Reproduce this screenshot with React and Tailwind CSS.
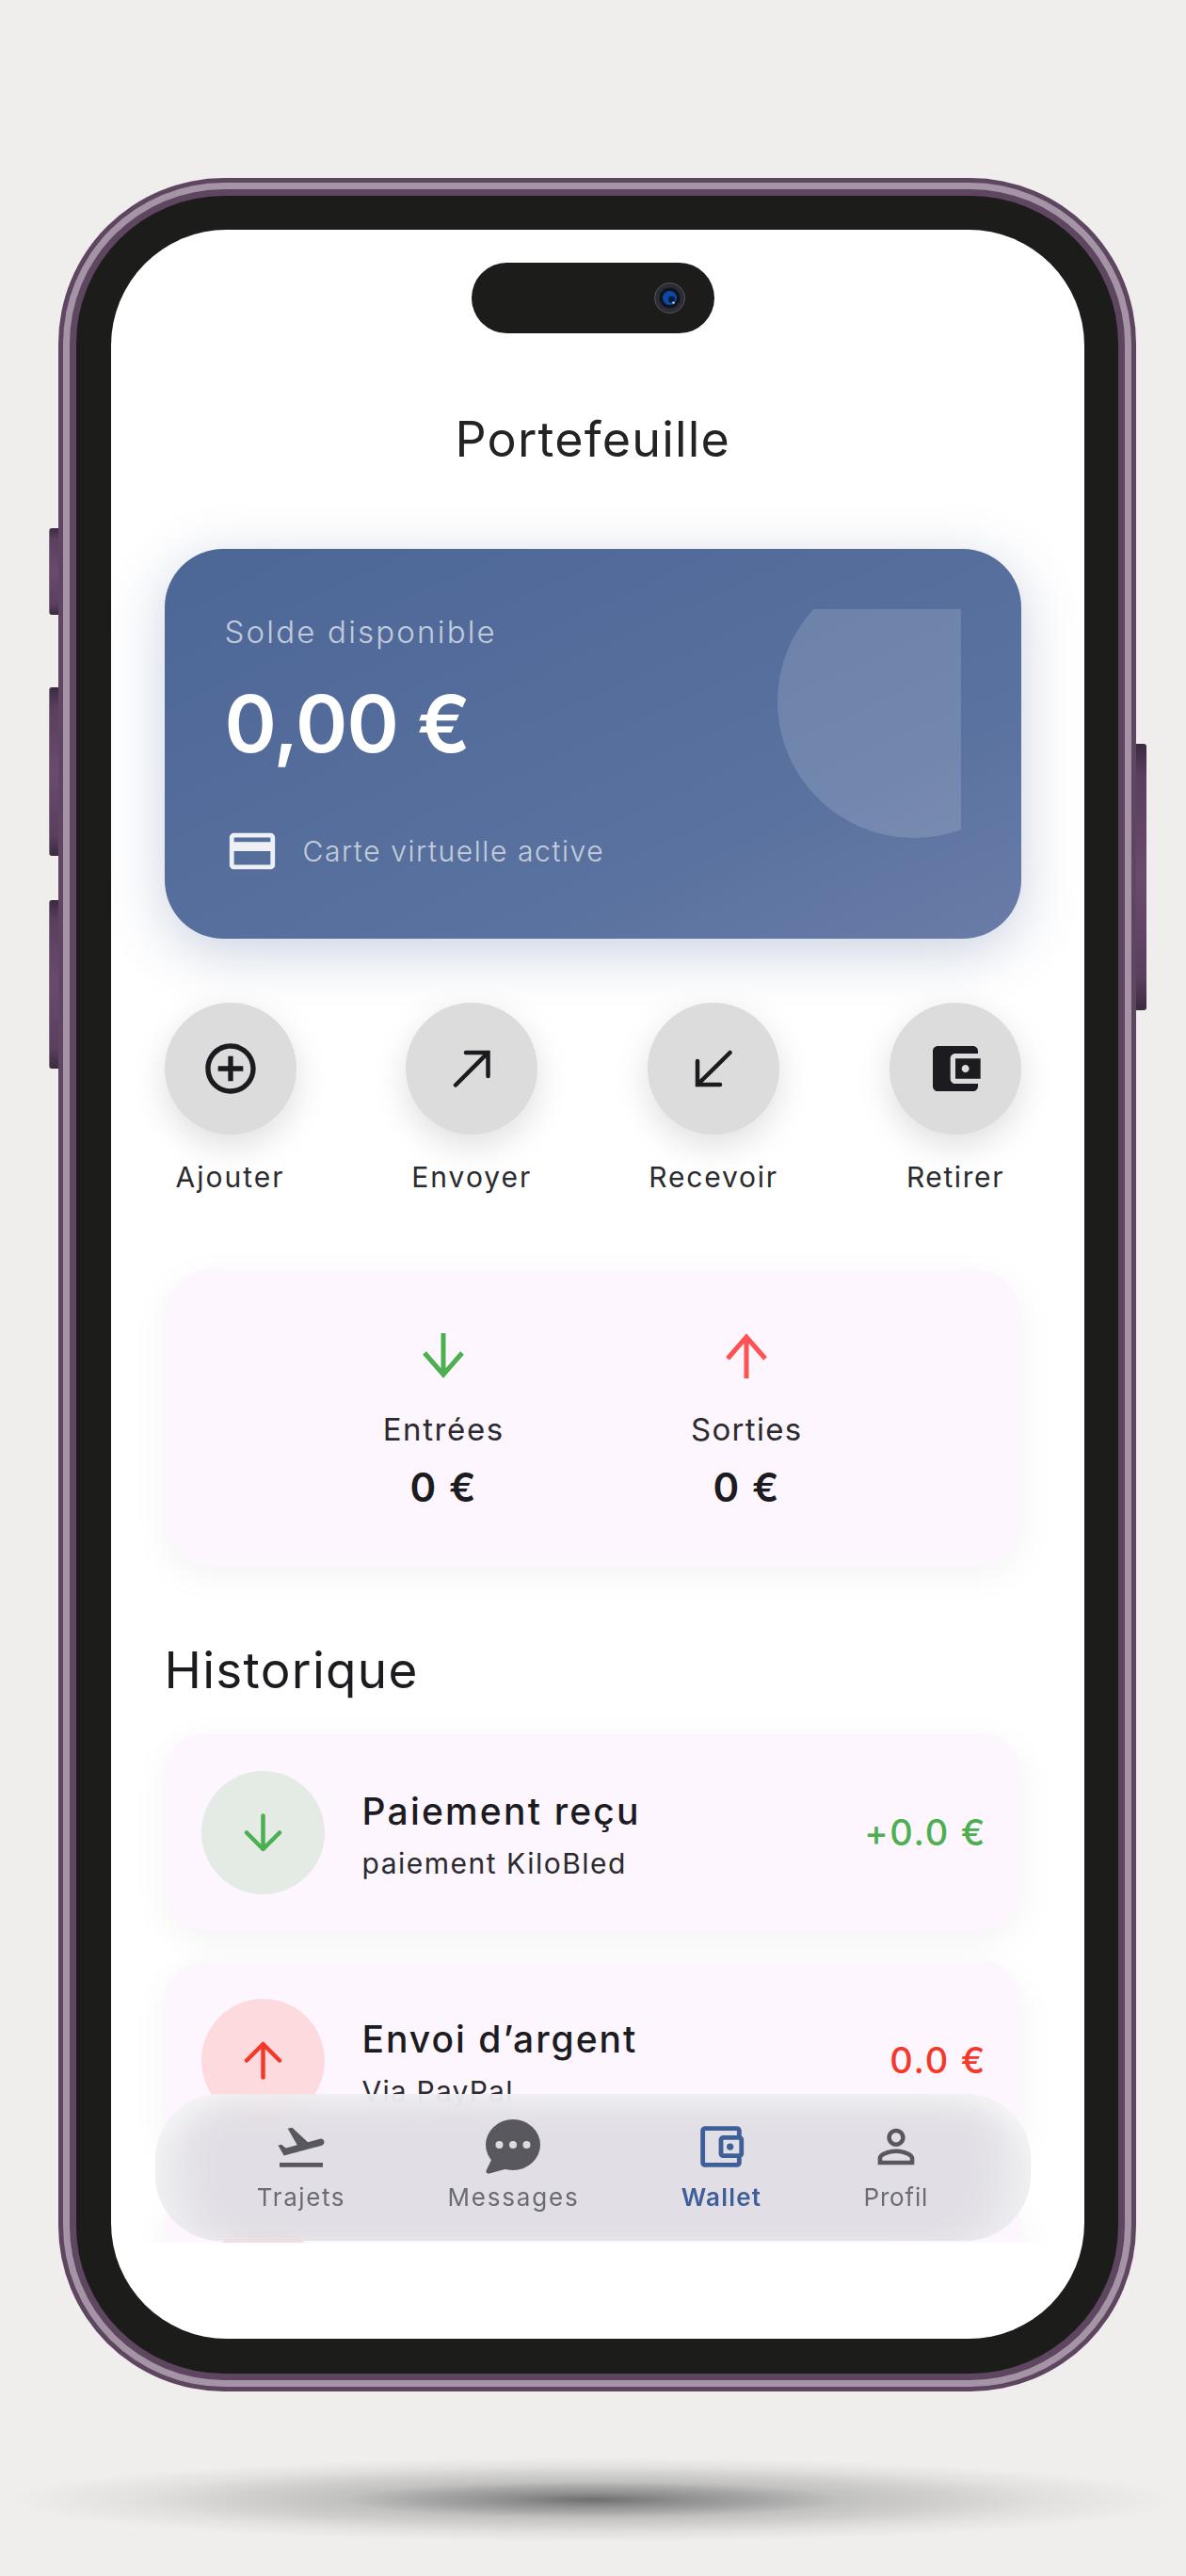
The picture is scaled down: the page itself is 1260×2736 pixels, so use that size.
import React from 'react';

const sideGradient = 'bg-[linear-gradient(to_bottom,#3b2a40,#5a3f5e_12%,#6b4a6e_50%,#5a3f5e_88%,#3b2a40)]';
const sideButton = `absolute w-[10px] left-[-10px] rounded-l-[3px] border-l border-[#7d7480] ${sideGradient}`;

const PlusCircleIcon = () => (
  <svg width="64" height="64" viewBox="0 0 24 24" fill="#1c1b1f">
    <path d="M13 7h-2v4H7v2h4v4h2v-4h4v-2h-4V7zm-1-5C6.48 2 2 6.48 2 12s4.48 10 10 10 10-4.48 10-10S17.52 2 12 2zm0 18c-4.41 0-8-3.59-8-8s3.59-8 8-8 8 3.59 8 8-3.59 8-8 8z" />
  </svg>
);

const ArrowOutIcon = () => (
  <svg width="40" height="40" viewBox="0 0 40 40" fill="none" stroke="#1c1b1f" strokeWidth="4.5" strokeLinecap="round">
    <path d="M14 3H37.5V28M37.5 3L3 37.5" />
  </svg>
);

const ArrowInIcon = () => (
  <svg width="40" height="40" viewBox="0 0 40 40" fill="none" stroke="#1c1b1f" strokeWidth="4.5" strokeLinecap="round">
    <path d="M3 12V37H27M3 37L37.5 3" />
  </svg>
);

const WalletFilledIcon = () => (
  <svg width="64" height="64" viewBox="0 0 24 24" fill="#1c1b1f">
    <path d="M21 18v1c0 1.1-.9 2-2 2H5c-1.11 0-2-.9-2-2V5c0-1.1.89-2 2-2h14c1.1 0 2 .9 2 2v1h-9c-1.11 0-2 .9-2 2v8c0 1.1.89 2 2 2h9zm-9-2h10V8H12v8zm4-2.5c-.83 0-1.5-.67-1.5-1.5s.67-1.5 1.5-1.5 1.5.67 1.5 1.5-.67 1.5-1.5 1.5z" />
  </svg>
);

const StatArrow = ({ up, color }) => (
  <svg width="46" height="48" viewBox="0 0 46 48" fill="none" stroke={color} strokeWidth="5">
    {up ? <path d="M23 48V4M3 27L23 4L43 27" /> : <path d="M23 0V44M3 21L23 44L43 21" />}
  </svg>
);

const RowArrow = ({ up, color }) => (
  <svg width="41" height="41" viewBox="0 0 41 41" fill="none" stroke={color} strokeWidth="4.5" strokeLinecap="round" strokeLinejoin="round">
    {up ? <path d="M20.5 38.5V3M3 20.5L20.5 3L38 20.5" /> : <path d="M20.5 2.5V38M3 20.5L20.5 38L38 20.5" />}
  </svg>
);

const TakeoffIcon = () => (
  <svg width="58" height="58" viewBox="0 0 24 24" fill="#58585e">
    <path d="M2.5 19h19v2h-19zm19.57-9.36c-.21-.8-1.04-1.28-1.84-1.06L14.92 10l-6.9-6.43-1.93.51 4.14 7.17-4.97 1.33-1.97-1.54-1.45.39 2.59 4.49s7.12-1.9 16.57-4.43c.81-.23 1.28-1.05 1.07-1.85z" />
  </svg>
);

const ChatIcon = () => (
  <svg width="58" height="58" viewBox="0 0 58 58">
    <ellipse cx="29" cy="27" rx="29" ry="27" fill="#58585e" />
    <path d="M7 41L0.5 54.5C0 57 2 58 4 57.5L24 52Z" fill="#58585e" />
    <circle cx="14.5" cy="27" r="4" fill="#dcdbe0" />
    <circle cx="29" cy="27" r="4" fill="#dcdbe0" />
    <circle cx="43.5" cy="27" r="4" fill="#dcdbe0" />
  </svg>
);

const WalletOutlineIcon = () => (
  <svg width="58" height="58" viewBox="0 0 24 24" fill="#3f5f99">
    <path d="M21 7.28V5c0-1.1-.9-2-2-2H5c-1.11 0-2 .9-2 2v14c0 1.1.89 2 2 2h14c1.1 0 2-.9 2-2v-2.28c.59-.35 1-.98 1-1.72V9c0-.74-.41-1.37-1-1.72zM20 9v6h-7V9h7zM5 19V5h14v2h-6c-1.1 0-2 .9-2 2v6c0 1.1.9 2 2 2h6v2H5z" />
    <circle cx="16" cy="12" r="1.5" />
  </svg>
);

const PersonIcon = () => (
  <svg width="58" height="58" viewBox="0 0 24 24" fill="#58585e">
    <path d="M12 5.9c1.16 0 2.1.94 2.1 2.1s-.94 2.1-2.1 2.1S9.9 9.16 9.9 8s.94-2.1 2.1-2.1m0 9c2.97 0 6.1 1.46 6.1 2.1v1.1H5.9V17c0-.64 3.13-2.1 6.1-2.1M12 4C9.79 4 8 5.79 8 8s1.79 4 4 4 4-1.79 4-4-1.79-4-4-4zm0 9c-2.67 0-8 1.34-8 4v3h16v-3c0-2.66-5.33-4-8-4z" />
  </svg>
);

const actions = [
  { label: 'Ajouter', icon: <PlusCircleIcon />, tracking: 'tracking-[2px]' },
  { label: 'Envoyer', icon: <ArrowOutIcon />, tracking: 'tracking-[2px]' },
  { label: 'Recevoir', icon: <ArrowInIcon />, tracking: 'tracking-[1.8px]' },
  { label: 'Retirer', icon: <WalletFilledIcon />, tracking: 'tracking-[1.6px]' },
];

const navItems = [
  { label: 'Trajets', icon: <TakeoffIcon />, tracking: 'tracking-[1.6px]' },
  { label: 'Messages', icon: <ChatIcon />, tracking: 'tracking-[1.8px]' },
  { label: 'Wallet', icon: <WalletOutlineIcon />, tracking: 'tracking-[1.2px]', active: true },
  { label: 'Profil', icon: <PersonIcon />, tracking: 'tracking-[0.8px]' },
];

const rowCard = 'flex items-center h-[210px] pl-[39px] pr-[37px] rounded-[44px] bg-[#fdf6fe] shadow-[0_10px_40px_rgba(0,0,0,0.05)]';

const Transaction = ({ title, sub, amount, up, titleTracking, subTracking }) => (
  <div className={rowCard}>
    <div className={`w-[131px] h-[131px] rounded-full flex items-center justify-center shrink-0 ${up ? 'bg-[#fddadd]' : 'bg-[#e3ebe4]'}`}>
      <RowArrow up={up} color={up ? '#f4392b' : '#4caf50'} />
    </div>
    <div className="ml-[40px] flex-1 pt-[4px]">
      <div className={`text-[39px] leading-[54px] font-medium text-[#1c1b1f] ${titleTracking}`}>{title}</div>
      <div className={`mt-[7px] text-[30px] leading-[42px] text-[#2b2a2e] ${subTracking}`}>{sub}</div>
    </div>
    <div className={`text-[38px] leading-[54px] font-medium tracking-[1.7px] ${up ? 'text-[#f4392b]' : 'text-[#4caf50]'}`}>{amount}</div>
  </div>
);

export default function App() {
  return (
    <div className="w-[1260px] h-[2736px] overflow-hidden bg-[#efeeec] pt-[189px] font-[Inter,sans-serif]">
      {/* phone frame */}
      <div className="relative ml-[62px] w-[1145px] h-[2351px] rounded-[176px] bg-[#5e4560] p-[5px]">
        <div className={`${sideButton} top-[372px] h-[92px]`} />
        <div className={`${sideButton} top-[541px] h-[179px]`} />
        <div className={`${sideButton} top-[767px] h-[179px]`} />
        <div className={`absolute right-[-11px] top-[601px] h-[283px] w-[11px] rounded-r-[3px] ${sideGradient}`} />

        <div className="w-full h-full rounded-[171px] bg-[#a593a6] p-[7px]">
          <div className="w-full h-full rounded-[164px] bg-[#5e4560] p-[7px]">
            <div className="w-full h-full rounded-[157px] bg-[#1c1c1a] pt-[36px] pl-[36.5px] pr-[36px] pb-[37px]">
              {/* screen */}
              <div className="relative w-full h-full rounded-[123px] bg-white overflow-hidden">
                <div className="h-[2138px] overflow-hidden pl-[57px] pr-[67px] pt-[35px]">
                  {/* island */}
                  <div className="mx-auto w-[258px] h-[75px] rounded-full bg-[#1c1c1a] flex items-center justify-end pr-[31px]">
                    <svg width="33" height="33" viewBox="0 0 33 33">
                      <circle cx="16.5" cy="16.5" r="16" fill="#2c2d33" stroke="#55565c" strokeWidth="1" />
                      <circle cx="16.5" cy="16.5" r="11" fill="#10141f" />
                      <circle cx="16.5" cy="16.5" r="7.5" fill="#0c4aa6" />
                      <circle cx="18.5" cy="18" r="3.5" fill="#0a1a3a" />
                      <circle cx="20.5" cy="21.5" r="1.2" fill="#c9d6ea" />
                    </svg>
                  </div>

                  <h1 className="mt-[83px] text-center text-[52px] leading-[60px] font-normal tracking-[1.2px] text-[#232326]">Portefeuille</h1>

                  {/* balance card */}
                  <div className="mt-[86px] h-[414px] rounded-[62px] p-[64px] text-white bg-gradient-to-br from-[#4c6696] via-[#5a729f] via-70% to-[#6a7ca8] shadow-[0_14px_60px_rgba(78,104,152,0.3)]">
                    <div className="relative h-full overflow-hidden">
                      <div className="absolute right-[-95px] top-[-47px] w-[290px] h-[290px] rounded-full bg-white/15" />
                      <div className="relative text-[33px] leading-[48px] font-light text-white/65 tracking-[2.2px]">Solde disponible</div>
                      <div className="relative mt-[24px] text-[84px] leading-[100px] font-semibold tracking-[-1px]">0,00 €</div>
                      <div className="relative mt-[56px] flex items-center gap-[25px]">
                        <svg width="58" height="58" viewBox="0 0 24 24" fill="#eef0f6">
                          <path d="M20 4H4c-1.11 0-1.99.89-1.99 2L2 18c0 1.11.89 2 2 2h16c1.11 0 2-.89 2-2V6c0-1.11-.89-2-2-2zm0 14H4v-6h16v6zm0-10H4V6h16v2z" />
                        </svg>
                        <span className="text-[30px] font-light text-white/65 tracking-[1.6px]">Carte virtuelle active</span>
                      </div>
                    </div>
                  </div>

                  {/* actions */}
                  <div className="mt-[68px] flex justify-between">
                    {actions.map((a) => (
                      <div key={a.label} className="w-[140px] flex flex-col items-center">
                        <div className="w-[140px] h-[140px] rounded-full flex items-center justify-center bg-[#dcdcdc] shadow-[0_12px_36px_rgba(0,0,0,0.13)]">
                          {a.icon}
                        </div>
                        <span className={`mt-[23px] text-[30px] leading-[44px] whitespace-nowrap text-[#2b2a2e] ${a.tracking}`}>{a.label}</span>
                      </div>
                    ))}
                  </div>

                  {/* totals */}
                  <div className="mt-[77px] h-[313px] rounded-[48px] bg-[#fdf6fe] pt-[67px] pl-[5px] shadow-[0_10px_40px_rgba(0,0,0,0.05)]">
                    <div className="mx-auto w-[644px] grid grid-cols-2">
                      <div className="flex flex-col items-center">
                        <StatArrow color="#4caf50" />
                        <span className="mt-[31px] text-[33px] leading-[46px] tracking-[1.6px] text-[#2b2a2e]">Entrées</span>
                        <span className="mt-[11px] text-[42px] leading-[56px] font-semibold tracking-[1.5px] text-[#1c1b1f]">0 €</span>
                      </div>
                      <div className="flex flex-col items-center">
                        <StatArrow up color="#ff5252" />
                        <span className="mt-[31px] text-[33px] leading-[46px] tracking-[1.3px] text-[#2b2a2e]">Sorties</span>
                        <span className="mt-[11px] text-[42px] leading-[56px] font-semibold tracking-[1.5px] text-[#1c1b1f]">0 €</span>
                      </div>
                    </div>
                  </div>

                  <h2 className="mt-[77px] text-[53px] leading-[70px] font-normal tracking-[1.3px] text-[#1c1b1f]">Historique</h2>

                  <div className="mt-[32px] flex flex-col gap-[32px]">
                    <Transaction title="Paiement reçu" sub="paiement KiloBled" amount="+0.0 €" titleTracking="tracking-[2.2px]" subTracking="tracking-[1.5px]" />
                    <Transaction up title="Envoi d’argent" sub="Via PayPal" amount="0.0 €" titleTracking="tracking-[2px]" subTracking="tracking-[1.2px]" />
                    <div className={rowCard}>
                      <div className="w-[131px] h-[131px] rounded-full bg-[#fddadd] shrink-0" />
                    </div>
                  </div>
                </div>

                {/* floating nav */}
                <nav className="absolute left-[47px] top-[1980px] w-[930px] h-[156px] rounded-[70px] pt-[27px] flex justify-evenly bg-[#dcdbe0]/85 backdrop-blur-lg shadow-[inset_0_26px_30px_-14px_rgba(255,255,255,0.5),inset_46px_0_44px_-24px_rgba(255,255,255,0.5),inset_-46px_0_44px_-24px_rgba(255,255,255,0.5)]">
                  {navItems.map((n) => (
                    <div key={n.label} className="flex flex-col items-center">
                      {n.icon}
                      <span className={`mt-[6px] text-[26px] leading-[38px] ${n.tracking} ${n.active ? 'font-semibold text-[#3f5f99]' : 'text-[#6b6b72]'}`}>{n.label}</span>
                    </div>
                  ))}
                </nav>
              </div>
            </div>
          </div>
        </div>
      </div>

      {/* floor shadow */}
      <div className="mt-[70px] mx-auto w-[1240px] h-[90px] bg-[radial-gradient(ellipse_closest-side_at_center,#6f6f6f_0%,#8f8f8f_15%,#a8a8a8_30%,#c2c2c1_43%,#d0cfce_60%,#e2e1df_78%,#efeeec_100%)]" />
    </div>
  );
}
